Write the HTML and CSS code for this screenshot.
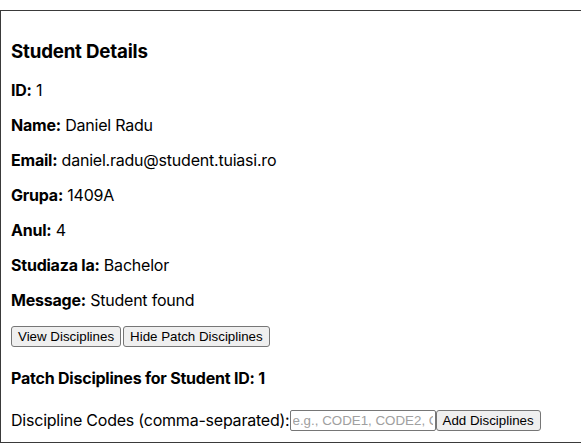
FILE: index.html
```html
<!DOCTYPE html>
<html>
<head>
<meta charset="utf-8">
<link rel="stylesheet" href="styles.css">
</head>
<body>
<div class="card">
  <h3 class="title">Student Details</h3>
  <p class="row"><strong>ID:</strong> 1</p>
  <p class="row"><strong>Name:</strong> Daniel Radu</p>
  <p class="row"><strong>Email:</strong> daniel.radu@student.tuiasi.ro</p>
  <p class="row"><strong>Grupa:</strong> 1409A</p>
  <p class="row"><strong>Anul:</strong> 4</p>
  <p class="row"><strong>Studiaza la:</strong> Bachelor</p>
  <p class="row"><strong>Message:</strong> Student found</p>
  <div class="actions">
    <button class="btn">View Disciplines</button>
    <button class="btn">Hide Patch Disciplines</button>
  </div>
  <h4 class="subtitle">Patch Disciplines for Student ID: 1</h4>
  <div class="form-row">
    <label class="label">Discipline Codes (comma-separated):</label>
    <input class="input" type="text" placeholder="e.g., CODE1, CODE2, CODE3">
    <button class="btn">Add Disciplines</button>
  </div>
</div>
</body>
</html>
```
FILE: styles.css
```css
html, body {
  margin: 0;
  padding: 0;
  background: #fff;
}
body {
  font-family: Inter, "Helvetica Neue", Arial, sans-serif;
  color: #000;
  padding-top: 10px;
  letter-spacing: -0.22px;
}
.card {
  border: 1px solid #3a3a3a;
  border-right: none;
  padding: 10px 10px 11px;
}
.title {
  font-size: 18.72px;
  font-weight: 700;
  margin: 18.72px 0;
  line-height: 23px;
  letter-spacing: -0.2px;
}
.row {
  font-size: 16px;
  line-height: 19px;
  margin: 16px 0;
}
.row strong {
  font-weight: 700;
}
.actions {
  display: flex;
  gap: 2px;
  margin-top: 16px;
}
.btn {
  font-family: "Liberation Sans", Arial, sans-serif;
  font-size: 13.33px;
  letter-spacing: 0;
  background: #efefef;
  border: 1px solid #767676;
  border-radius: 3px;
  padding: 1px 6px;
  height: 21px;
  color: #000;
  margin: 0;
}
.subtitle {
  font-size: 16px;
  font-weight: 700;
  line-height: 19px;
  margin: 22px 0 21px;
}
.form-row {
  display: flex;
  align-items: center;
  height: 22px;
}
.label {
  font-size: 16px;
  line-height: 19px;
}
.input {
  font-family: "Liberation Sans", Arial, sans-serif;
  font-size: 13.33px;
  letter-spacing: 0;
  width: 146px;
  height: 21px;
  box-sizing: border-box;
  border: 1px solid #767676;
  border-radius: 2px;
  padding: 1px 2px;
  margin: 0;
}
.input::placeholder {
  color: #a0a0a0;
}
```
